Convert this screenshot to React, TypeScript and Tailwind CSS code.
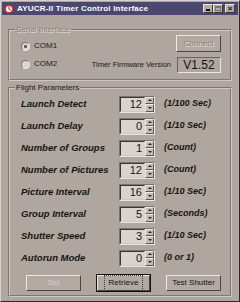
import React from 'react';

const params = [
  { label: 'Launch Detect', value: '12', unit: '(1/100 Sec)' },
  { label: 'Launch Delay', value: '0', unit: '(1/10 Sec)' },
  { label: 'Number of Groups', value: '1', unit: '(Count)' },
  { label: 'Number of Pictures', value: '12', unit: '(Count)' },
  { label: 'Picture Interval', value: '16', unit: '(1/10 Sec)' },
  { label: 'Group Interval', value: '5', unit: '(Seconds)' },
  { label: 'Shutter Speed', value: '3', unit: '(1/10 Sec)' },
  { label: 'Autorun Mode', value: '0', unit: '(0 or 1)' },
];

function Radio({ checked, label }: { checked?: boolean; label: string }) {
  return (
    <div className="flex items-center gap-[4px]">
      <span className="w-[9px] h-[9px] rounded-full bg-[#dcd6d0] border border-t-[#7c756f] border-l-[#7c756f] border-b-[#eee8e2] border-r-[#eee8e2] flex items-center justify-center">
        {checked && <span className="w-[3px] h-[3px] rounded-full bg-[#4a4644]" />}
      </span>
      <span className="text-[8px] text-[#1c1a18]">{label}</span>
    </div>
  );
}

function Spin({ value }: { value: string }) {
  return (
    <div className="flex h-[17px] w-[36px] border border-t-[#7a736d] border-l-[#7a736d] border-b-[#eae4de] border-r-[#eae4de] bg-[#d9d3cd]">
      <div className="flex-1 flex items-center justify-end pr-[2px] text-[11px] leading-none text-[#151311] border border-t-[#3c3834] border-l-[#3c3834] border-b-[#cec8c2] border-r-transparent">
        {value}
      </div>
      <div className="w-[9px] flex flex-col">
        <div className="flex-1 flex items-center justify-center bg-[#c4bdb6] border border-t-[#f0eae4] border-l-[#f0eae4] border-b-[#5e5853] border-r-[#5e5853]">
          <span className="w-0 h-0 border-l-[2px] border-r-[2px] border-b-[2px] border-l-transparent border-r-transparent border-b-[#222]" />
        </div>
        <div className="flex-1 flex items-center justify-center bg-[#c4bdb6] border border-t-[#f0eae4] border-l-[#f0eae4] border-b-[#5e5853] border-r-[#5e5853]">
          <span className="w-0 h-0 border-l-[2px] border-r-[2px] border-t-[2px] border-l-transparent border-r-transparent border-t-[#222]" />
        </div>
      </div>
    </div>
  );
}

function Btn({ children, disabled, focused }: { children: React.ReactNode; disabled?: boolean; focused?: boolean }) {
  return (
    <div className={focused ? 'border border-[#111]' : ''}>
      <div
        className={`flex items-center justify-center h-[16px] ${focused ? 'w-[53px]' : 'w-[55px]'} bg-[#b1a9a2] border border-t-[#efe9e3] border-l-[#efe9e3] border-b-[#4a4541] border-r-[#4a4541] text-[8px]`}
      >
        <span
          className={
            disabled
              ? 'text-[#d6d0ca]'
              : focused
                ? 'text-[#161412] px-[3px] outline outline-1 outline-dotted outline-[#3a3632] outline-offset-[1px]'
                : 'text-[#161412]'
          }
        >
          {children}
        </span>
      </div>
    </div>
  );
}

export default function App() {
  return (
    <div
      className="w-[240px] h-[302px] bg-[#aea69f] border border-t-[#d8d2cc] border-l-[#d8d2cc] border-b-[#2e2a27] border-r-[#2e2a27] p-[1px] flex flex-col"
      style={{ fontFamily: '"Liberation Sans", Arial, sans-serif' }}
    >
      <div className="h-[13px] bg-[#4a4871] flex items-center pl-[2px] pr-[3px]">
        <svg width="10" height="10" viewBox="0 0 10 10" className="mr-[3px]">
          <circle cx="5" cy="5" r="4.6" fill="#c8302a" />
          <circle cx="5" cy="5" r="3.1" fill="#f4eeee" />
          <path d="M5 2.6V5l1.6 1.1" stroke="#b02020" strokeWidth="1" fill="none" />
        </svg>
        <span className="text-[8px] tracking-[0.2px] font-bold text-white whitespace-nowrap">AYUCR-II Timer Control Interface</span>
        <div className="ml-auto flex items-center">
          <span className="w-[10px] h-[9px] bg-[#b3aca5] border border-t-[#eee8e2] border-l-[#eee8e2] border-b-[#3a3632] border-r-[#3a3632] flex items-end justify-center">
            <span className="w-[4px] h-[2px] bg-[#111] mb-[1px]" />
          </span>
          <span className="w-[10px] h-[9px] bg-[#b3aca5] border border-t-[#eee8e2] border-l-[#eee8e2] border-b-[#3a3632] border-r-[#3a3632] flex items-center justify-center">
            <span className="w-[6px] h-[5px] border border-[#7a746e] border-t-2" />
          </span>
          <span className="ml-[2px] w-[10px] h-[9px] bg-[#b3aca5] border border-t-[#eee8e2] border-l-[#eee8e2] border-b-[#3a3632] border-r-[#3a3632] flex items-center justify-center text-[8px] leading-none font-bold text-[#111]">
            ×
          </span>
        </div>
      </div>

      <fieldset className="mx-[6px] mt-[11px] h-[55px] border-2 border-[#cfc8c1] [border-style:groove] pl-[11px] pr-[12px] pt-[0px] pb-0 min-w-0">
        <legend className="text-[8px] leading-none px-[1px] ml-[-6px]">
          <span className="text-[#8a837d] [text-shadow:1px_1px_0_#e6e0da]">Serial Interface</span>
        </legend>
        <div className="flex">
          <div className="flex flex-col gap-[6px] pt-[6px]">
            <Radio checked label="COM1" />
            <Radio label="COM2" />
          </div>
          <div className="ml-auto flex flex-col items-end gap-[5px] pt-[1px] -mr-[3px]">
            <div className="w-[45px] h-[17px] bg-[#b1a9a2] border border-t-[#efe9e3] border-l-[#efe9e3] border-b-[#4a4541] border-r-[#4a4541] flex items-center justify-center text-[8px]">
              <span className="text-[#8b847e] [text-shadow:1px_1px_0_#e8e2dc]">Connect</span>
            </div>
            <div className="flex items-center gap-[6px]">
              <span className="text-[7.5px] text-[#1c1a18] whitespace-nowrap">Timer Firmware Version</span>
              <div className="w-[44px] h-[16px] border border-t-[#6c655f] border-l-[#6c655f] border-b-[#ece6e0] border-r-[#ece6e0] flex items-center justify-center text-[12px] leading-none text-[#161412]">
                V1.52
              </div>
            </div>
          </div>
        </div>
      </fieldset>

      <fieldset className="mx-[6px] mt-[3px] flex-1 mb-[3px] border-2 border-[#cfc8c1] [border-style:groove] pl-[11px] pr-[8px] pt-[1px] min-w-0">
        <legend className="text-[8px] leading-none px-[1px] ml-[-6px] text-[#1c1a18]">Flight Parameters</legend>
        <div className="flex flex-col">
          {params.map((p) => (
            <div key={p.label} className="h-[22px] flex items-center">
              <span className="w-[98px] text-[9.5px] font-bold italic text-[#161412] whitespace-nowrap">{p.label}</span>
              <Spin value={p.value} />
              <span className="ml-[9px] text-[9px] font-bold italic text-[#161412] whitespace-nowrap">{p.unit}</span>
            </div>
          ))}
        </div>
        <div className="flex items-center justify-between mt-[5px] pl-[5px] pr-[1px]">
          <Btn disabled>Set</Btn>
          <Btn focused>Retrieve</Btn>
          <Btn>Test Shutter</Btn>
        </div>
      </fieldset>
    </div>
  );
}
